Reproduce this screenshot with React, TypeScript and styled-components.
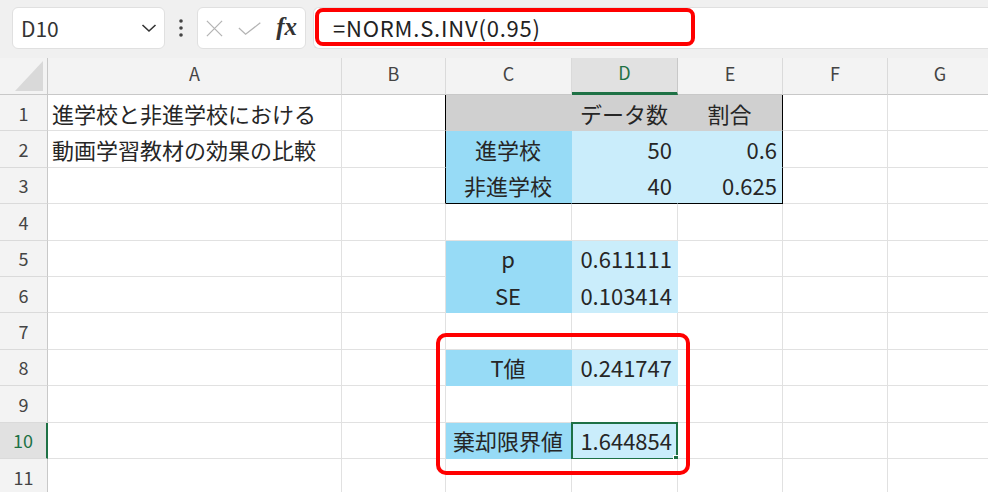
import styled, { createGlobalStyle } from "styled-components";

const GlobalStyle = createGlobalStyle`
  html, body {
    margin: 0;
    padding: 0;
    background: #fff;
    overflow: hidden;
  }
  body {
    font-family: "Noto Sans CJK JP", "Noto Sans", sans-serif;
  }
`;

type Fill = "gray" | "blue" | "light";
type Align = "left" | "center" | "right";

type CellData = {
  text?: string;
  align?: Align;
  fill?: Fill;
  boxRight?: boolean;
  boxBottom?: boolean;
  selected?: boolean;
};

const FILLS: Record<Fill, string> = {
  gray: "#d0d0d0",
  blue: "#97dbf6",
  light: "#caedfb",
};

const GRID = "#e1e1e1";
const COLS = ["A", "B", "C", "D", "E", "F", "G"];
const ACTIVE_COL = "D";
const ACTIVE_ROW = 10;

const rows: CellData[][] = [
  [
    { text: "進学校と非進学校における", align: "left" },
    { boxRight: true },
    { fill: "gray" },
    { text: "データ数", fill: "gray", align: "center" },
    { text: "割合", fill: "gray", align: "center", boxRight: true },
    {},
    {},
  ],
  [
    { text: "動画学習教材の効果の比較", align: "left" },
    { boxRight: true },
    { text: "進学校", fill: "blue", align: "center" },
    { text: "50", fill: "light", align: "right" },
    { text: "0.6", fill: "light", align: "right", boxRight: true },
    {},
    {},
  ],
  [
    {},
    { boxRight: true },
    { text: "非進学校", fill: "blue", align: "center", boxBottom: true },
    { text: "40", fill: "light", align: "right", boxBottom: true },
    { text: "0.625", fill: "light", align: "right", boxRight: true, boxBottom: true },
    {},
    {},
  ],
  [{}, {}, {}, {}, {}, {}, {}],
  [
    {},
    {},
    { text: "p", fill: "blue", align: "center" },
    { text: "0.611111", fill: "light", align: "right" },
    {},
    {},
    {},
  ],
  [
    {},
    {},
    { text: "SE", fill: "blue", align: "center" },
    { text: "0.103414", fill: "light", align: "right" },
    {},
    {},
    {},
  ],
  [{}, {}, {}, {}, {}, {}, {}],
  [
    {},
    {},
    { text: "T値", fill: "blue", align: "center" },
    { text: "0.241747", fill: "light", align: "right" },
    {},
    {},
    {},
  ],
  [{}, {}, {}, {}, {}, {}, {}],
  [
    {},
    {},
    { text: "棄却限界値", fill: "blue", align: "center" },
    { text: "1.644854", fill: "light", align: "right", selected: true },
    {},
    {},
    {},
  ],
  [{}, {}, {}, {}, {}, {}, {}],
];

const App = () => {
  return (
    <>
      <GlobalStyle />
      <Page>
        <Toolbar>
          <NameBox>
            <NameText>D10</NameText>
            <svg width="16" height="10" viewBox="0 0 16 10">
              <polyline
                points="1.5,2 8,8 14.5,2"
                fill="none"
                stroke="#333"
                strokeWidth="1.6"
              />
            </svg>
          </NameBox>
          <Grip>
            <svg width="6" height="20" viewBox="0 0 6 20">
              <circle cx="3" cy="3" r="1.8" fill="#444" />
              <circle cx="3" cy="10" r="1.8" fill="#444" />
              <circle cx="3" cy="17" r="1.8" fill="#444" />
            </svg>
          </Grip>
          <FuncBox>
            <svg width="19" height="19" viewBox="0 0 19 19">
              <path
                d="M1 1 L18 18 M18 1 L1 18"
                stroke="#b4b4b4"
                strokeWidth="1.4"
                fill="none"
              />
            </svg>
            <svg width="26" height="15" viewBox="0 0 26 15">
              <polyline
                points="1,7 8.5,14 25,1"
                stroke="#b4b4b4"
                strokeWidth="1.4"
                fill="none"
              />
            </svg>
            <Fx>fx</Fx>
          </FuncBox>
          <FormulaBox>
            <FormulaHighlight>=NORM.S.INV(0.95)</FormulaHighlight>
          </FormulaBox>
        </Toolbar>
        <SheetArea>
          <Sheet>
            <Corner>
              <svg width="28" height="30" viewBox="0 0 28 30">
                <polygon points="28,0 28,30 0,30" fill="#d9d9d9" />
              </svg>
            </Corner>
            {COLS.map((c) => (
              <ColHeader key={c} $active={c === ACTIVE_COL}>
                {c}
              </ColHeader>
            ))}
            {rows.map((row, r) => (
              <Row key={r}>
                <RowHeader $active={r + 1 === ACTIVE_ROW}>{r + 1}</RowHeader>
                {row.map((cell, c) => (
                  <Cell
                    key={c}
                    $fill={cell.fill}
                    $align={cell.align ?? "left"}
                    $boxRight={cell.boxRight}
                    $boxBottom={cell.boxBottom}
                  >
                    {cell.text}
                    {cell.selected && (
                      <>
                        <Selection />
                        <FillHandle />
                      </>
                    )}
                  </Cell>
                ))}
              </Row>
            ))}
          </Sheet>
          <Callout />
        </SheetArea>
      </Page>
    </>
  );
};

const Page = styled.div`
  display: flex;
  flex-direction: column;
  width: 988px;
  height: 492px;
  overflow: hidden;
`;

const Toolbar = styled.div`
  display: flex;
  flex-shrink: 0;
  align-items: flex-start;
  height: 58px;
  box-sizing: border-box;
  padding: 7px 0 0 12px;
  background: #f0f0f0;
`;

const NameBox = styled.div`
  display: flex;
  align-items: center;
  justify-content: space-between;
  width: 153px;
  height: 42px;
  box-sizing: border-box;
  padding: 0 7px 0 8px;
  background: #fff;
  border: 1px solid #e0e0e0;
  border-radius: 6px;
`;

const NameText = styled.span`
  font-size: 21px;
  color: #333;
`;

const Grip = styled.div`
  display: flex;
  align-items: center;
  justify-content: center;
  width: 32px;
  height: 42px;
`;

const FuncBox = styled.div`
  display: flex;
  align-items: center;
  gap: 15px;
  width: 109px;
  height: 42px;
  box-sizing: border-box;
  padding: 0 8px 0 8px;
  background: #fff;
  border: 1px solid #e0e0e0;
  border-radius: 6px;
`;

const Fx = styled.span`
  font-family: "Liberation Serif", "DejaVu Serif", serif;
  font-style: italic;
  font-weight: 600;
  font-size: 25px;
  color: #333;
  line-height: 1;
  margin-top: -3px;
`;

const FormulaBox = styled.div`
  flex: 1;
  height: 42px;
  margin-left: 7px;
  box-sizing: border-box;
  background: #fff;
  border: 1px solid #e0e0e0;
  border-right: none;
  border-radius: 6px 0 0 6px;
`;

const FormulaHighlight = styled.div`
  display: flex;
  align-items: center;
  width: 380px;
  height: 38px;
  margin: 0 0 0 1px;
  box-sizing: border-box;
  padding-left: 14px;
  border: 4px solid #ff0000;
  border-radius: 8px;
  font-size: 22px;
  letter-spacing: 0.8px;
  color: #222;
`;

const SheetArea = styled.div`
  position: relative;
  flex: 1;
`;

const Sheet = styled.div`
  display: grid;
  grid-template-columns: 48px 294px 104px 126px 106px 105px 105px 105px;
  grid-template-rows: 37px repeat(11, 36.4px);
  width: max-content;
`;

const Row = styled.div`
  display: contents;
`;

const headerBase = `
  display: flex;
  align-items: center;
  justify-content: center;
  box-sizing: border-box;
  font-size: 18px;
  color: #444;
`;

const Corner = styled.div`
  ${headerBase}
  align-items: flex-end;
  justify-content: flex-end;
  padding: 0 4px 3px 0;
  background: #f3f3f3;
  border-right: 1px solid #c8c8c8;
  border-bottom: 1px solid #c8c8c8;
`;

const ColHeader = styled.div<{ $active?: boolean }>`
  ${headerBase}
  padding-bottom: 6px;
  background: ${(p) => (p.$active ? "#e1e1e1" : "#f3f3f3")};
  color: ${(p) => (p.$active ? "#1e7145" : "#444")};
  border-right: 1px solid ${(p) => (p.$active ? "#c8c8c8" : "#dadada")};
  border-bottom: ${(p) => (p.$active ? "3px solid #1e7145" : "1px solid #c8c8c8")};
`;

const RowHeader = styled.div<{ $active?: boolean }>`
  ${headerBase}
  background: ${(p) => (p.$active ? "#e1e1e1" : "#f3f3f3")};
  color: ${(p) => (p.$active ? "#1e7145" : "#444")};
  border-right: ${(p) => (p.$active ? "2px solid #1e7145" : "1px solid #c8c8c8")};
  border-bottom: 1px solid #dadada;
`;

const Cell = styled.div<{
  $fill?: Fill;
  $align: Align;
  $boxRight?: boolean;
  $boxBottom?: boolean;
}>`
  position: relative;
  display: flex;
  align-items: center;
  justify-content: ${(p) =>
    p.$align === "center" ? "center" : p.$align === "right" ? "flex-end" : "flex-start"};
  box-sizing: border-box;
  padding: 0 5px 0 4px;
  white-space: nowrap;
  font-size: 22px;
  color: #262626;
  background: ${(p) => (p.$fill ? FILLS[p.$fill] : "#fff")};
  border-right: 1px solid
    ${(p) => (p.$boxRight ? "#000" : p.$fill ? FILLS[p.$fill] : GRID)};
  border-bottom: 1px solid
    ${(p) => (p.$boxBottom ? "#000" : p.$fill ? FILLS[p.$fill] : GRID)};
`;

const Selection = styled.span`
  position: absolute;
  top: -1px;
  left: -1px;
  right: -1px;
  bottom: -2px;
  border: 2px solid #1e7145;
  pointer-events: none;
`;

const FillHandle = styled.span`
  position: absolute;
  right: -4px;
  bottom: -5px;
  width: 6px;
  height: 6px;
  background: #1e7145;
  border: 1px solid #fff;
`;

const Callout = styled.div`
  position: absolute;
  left: 436px;
  top: 275px;
  width: 254px;
  height: 142px;
  box-sizing: border-box;
  border: 4px solid #ff0000;
  border-radius: 10px;
  pointer-events: none;
`;

export default App;
